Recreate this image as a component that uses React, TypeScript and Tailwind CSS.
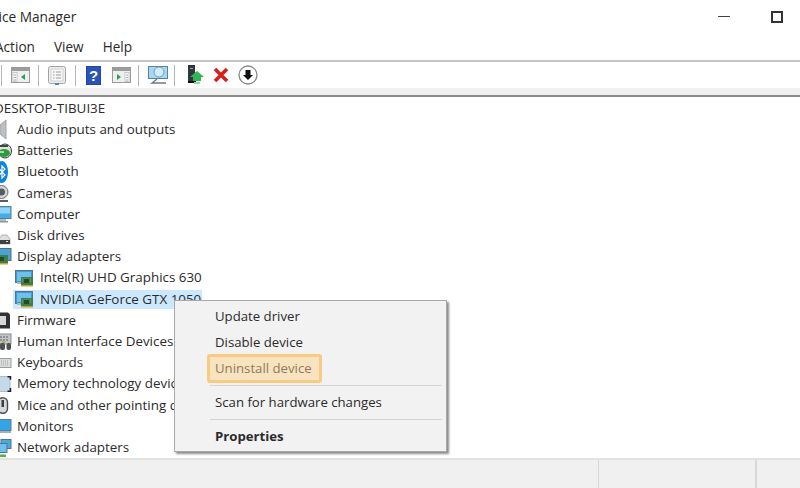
import React from "react";

const F = "font-['Open_Sans','Noto_Sans',sans-serif]";

function Monitor() {
  return (
    <svg width="19" height="18" viewBox="0 0 19 18">
      <rect x="0.500" y="1.500" width="17" height="12" fill="#3f9bd6" stroke="#5d7282" />
      <rect x="2" y="3" width="14" height="9" fill="#6fc0ec" />
      <rect x="2" y="13" width="6" height="2" fill="#a9b6bf" />
      <rect x="6" y="8" width="12" height="8" fill="#3e7f46" />
      <path d="M7 10h10M7 12h10" stroke="#7bb07a" strokeDasharray="1 1" />
      <rect x="9" y="10" width="5" height="4" fill="#26492c" />
      <rect x="6" y="16" width="12" height="1.500" fill="#c9a23a" />
    </svg>
  );
}

const I: Record<string, React.ReactNode> = {
  audio: (
    <svg width="16" height="21" viewBox="0 0 16 21">
      <path d="M0 6l6-5v19l-6-5z" fill="#bcc0c2" stroke="#a3a7aa" />
    </svg>
  ),
  batt: (
    <svg width="16" height="18" viewBox="0 0 16 18">
      <ellipse cx="5" cy="9" rx="6.500" ry="7" fill="#dfe5dc" stroke="#3a3d3c" />
      <ellipse cx="4" cy="11" rx="6" ry="4" fill="#2f9b41" />
      <path d="M0 4h8" stroke="#404446" strokeWidth="2" />
      <rect x="0" y="9" width="4" height="2" fill="#a7dba6" />
    </svg>
  ),
  bt: (
    <svg width="16" height="22" viewBox="0 0 16 22">
      <ellipse cx="2" cy="11" rx="6" ry="11" fill="#0a84e0" />
      <path d="M-1 7.500l6 6.500-3 3V5l3 3-6 6.500" fill="none" stroke="#fff" strokeWidth="1.200" />
    </svg>
  ),
  cam: (
    <svg width="16" height="17" viewBox="0 0 16 17">
      <circle cx="1.500" cy="7" r="6.500" fill="#d4d6d8" stroke="#6a6d70" />
      <circle cx="1.500" cy="7" r="3.500" fill="#555b60" />
      <rect x="-2" y="15" width="10" height="2" fill="#5b5f63" />
    </svg>
  ),
  comp: (
    <svg width="16" height="17" viewBox="0 0 16 17">
      <rect x="-3" y="0.500" width="14" height="12" fill="#49abe6" stroke="#5c7f98" />
      <rect x="-2" y="1.500" width="12" height="6" fill="#8fd3f6" />
      <rect x="0" y="13" width="6" height="2" fill="#b4bcc2" />
      <rect x="-2" y="15" width="10" height="1.500" fill="#8a949b" />
    </svg>
  ),
  disk: (
    <svg width="16" height="18" viewBox="0 0 16 18">
      <path d="M-1 12L2 8h5l3 4v5H-1z" fill="#dedfe0" stroke="#8b8d8f" strokeWidth="0.600" />
      <rect x="-1" y="13" width="11" height="4" fill="#3e4042" />
      <rect x="6" y="14" width="2" height="1" fill="#ddd" />
    </svg>
  ),
  disp: (
    <svg width="16" height="17" viewBox="0 0 16 17">
      <rect x="-3" y="0.500" width="14" height="12" fill="#4aa3d8" stroke="#5a6a78" />
      <rect x="-2" y="7" width="10" height="8" fill="#3e7f46" />
      <rect x="0" y="9" width="4" height="4" fill="#26492c" />
      <rect x="-2" y="15" width="10" height="1.500" fill="#c9a23a" />
    </svg>
  ),
  firm: (
    <svg width="16" height="17" viewBox="0 0 16 17">
      <path d="M-2 0.500h10l2 2v14H-2z" fill="#2f3133" />
      <rect x="-2" y="4" width="8" height="9" fill="#d5d7d8" />
    </svg>
  ),
  hid: (
    <svg width="16" height="18" viewBox="0 0 16 18">
      <rect x="-2" y="1" width="13" height="10" fill="#c2c5c8" stroke="#8a8c8e" />
      <path d="M0 4h9M0 7h9" stroke="#5b5e60" strokeDasharray="2 1" />
      <rect x="0" y="10" width="5" height="7" rx="2" fill="#4d5154" />
      <rect x="6.500" y="10" width="4.500" height="7" rx="2" fill="#4d5154" />
      <rect x="2" y="8" width="3" height="2" fill="#c9a23a" />
    </svg>
  ),
  kb: (
    <svg width="16" height="10" viewBox="0 0 16 10">
      <rect x="-3" y="0.500" width="14" height="9" fill="#dcdddd" stroke="#9a9c9e" />
      <path d="M-1 3h10M-1 5h10M-1 7h10" stroke="#a0a2a4" strokeDasharray="1 1" />
    </svg>
  ),
  mem: (
    <svg width="16" height="16" viewBox="0 0 16 16">
      <rect x="-3" y="0.500" width="13" height="15" rx="1" fill="#c4d9ea" stroke="#a9bccb" />
      <path d="M7.500 0.800h3v3M10.500 12v3.200h-3" fill="none" stroke="#1e1e1e" strokeWidth="1.500" />
    </svg>
  ),
  mouse: (
    <svg width="16" height="17" viewBox="0 0 16 17">
      <rect x="-2" y="0.700" width="9.500" height="15.600" rx="4.700" fill="#d6d8d9" stroke="#484a4d" strokeWidth="1.400" />
      <rect x="1.500" y="3" width="2.500" height="7" fill="#3d4043" />
    </svg>
  ),
  mon: (
    <svg width="16" height="14" viewBox="0 0 16 14">
      <rect x="-3" y="0.500" width="14" height="11" fill="#35a4e6" stroke="#5c7f98" />
      <rect x="-3" y="12" width="14" height="2" fill="#9fb0bb" />
    </svg>
  ),
  net: (
    <svg width="16" height="18" viewBox="0 0 16 18">
      <rect x="1" y="0.500" width="10" height="9" fill="#4aa9e0" stroke="#50758f" />
      <rect x="-3" y="4.500" width="10" height="9" fill="#6fc0ec" stroke="#50758f" />
      <rect x="-3" y="15.500" width="9" height="2.500" fill="#57b04a" />
    </svg>
  ),
};

const rows: { k: string; t: string; child?: boolean; sel?: boolean }[] = [
  { k: "desktop", t: "DESKTOP-TIBUI3E" },
  { k: "audio", t: "Audio inputs and outputs" },
  { k: "batt", t: "Batteries" },
  { k: "bt", t: "Bluetooth" },
  { k: "cam", t: "Cameras" },
  { k: "comp", t: "Computer" },
  { k: "disk", t: "Disk drives" },
  { k: "disp", t: "Display adapters" },
  { k: "", t: "Intel(R) UHD Graphics 630", child: true },
  { k: "", t: "NVIDIA GeForce GTX 1050", child: true, sel: true },
  { k: "firm", t: "Firmware" },
  { k: "hid", t: "Human Interface Devices" },
  { k: "kb", t: "Keyboards" },
  { k: "mem", t: "Memory technology devices" },
  { k: "mouse", t: "Mice and other pointing devices" },
  { k: "mon", t: "Monitors" },
  { k: "net", t: "Network adapters" },
];

function Sep() {
  return <div className="w-px h-[21px] bg-[#b5b5b5]" />;
}

function Win({ arrow, panes }: { arrow: string; panes: number[] }) {
  return (
    <svg width="19" height="16" viewBox="0 0 19 16">
      <rect x="0.500" y="0.500" width="18" height="15" fill="#efefef" stroke="#9a9a9a" />
      <rect x="1" y="1" width="17" height="3" fill="#9c9c9c" />
      {panes.map((x) => (
        <g key={x}>
          <rect x={x} y="5.500" width="4" height="9" fill="#fff" stroke="#a9a9a9" strokeWidth="0.600" />
          <path d={`M${x + 1} 8h2M${x + 1} 10.500h2M${x + 1} 13h2`} stroke="#7f93a3" strokeWidth="0.800" />
        </g>
      ))}
      <path d={arrow} fill="#27a34a" />
    </svg>
  );
}

export default function App() {
  return (
    <div className={`relative w-[800px] h-[488px] overflow-hidden bg-white flex flex-col text-[#2b2b2b] ${F}`}>
      {/* title bar */}
      <div className="h-[33px] flex items-center justify-between shrink-0">
        <span className="text-[13.700px] ml-[-26px] leading-none">Device Manager</span>
        <div className="flex items-center mr-[17px] gap-[41px]">
          <div className="w-3 h-px bg-[#444]" />
          <div className="w-[12px] h-[12px] border-2 border-[#333]" />
        </div>
      </div>
      {/* menu */}
      <div className="h-[27px] flex items-center text-[13.600px] ml-[-5px] gap-[19px] shrink-0 pt-[2px]">
        <span>Action</span>
        <span>View</span>
        <span>Help</span>
      </div>
      {/* toolbar */}
      <div className="h-[28px] border-t-2 border-[#c4c4c4] flex items-center shrink-0 pl-[1px]">
        <Sep />
        <div className="ml-[9px]"><Win arrow="M14 7v6l-4-3z" panes={[2]} /></div>
        <div className="ml-[8px]"><Sep /></div>
        <div className="ml-[9px]">
          <svg width="18" height="19" viewBox="0 0 18 19">
            <rect x="0.500" y="0.500" width="17" height="17" rx="2" fill="#eeeeee" stroke="#a3a3a3" />
            <rect x="3" y="3" width="12" height="12" fill="#f7f7f7" stroke="#bcbcbc" strokeWidth="0.600" />
            <path d="M5 6h1.500M8 6h5M5 9h1.500M8 9h5M5 12h1.500M8 12h5" stroke="#9b9b9b" />
            <rect x="7" y="17" width="4" height="2" fill="#3a8fd0" />
          </svg>
        </div>
        <div className="ml-[9px]"><Sep /></div>
        <div className="ml-[10px]">
          <svg width="15" height="19" viewBox="0 0 15 19">
            <rect width="15" height="19" fill="#2b54b8" stroke="#1a3a8a" />
            <text x="7.500" y="15" textAnchor="middle" fontSize="15" fontWeight="700" fill="#fff" fontFamily="Liberation Sans">?</text>
          </svg>
        </div>
        <div className="ml-[11px]"><Win arrow="M5 7v6l4-3z" panes={[13]} /></div>
        <div className="ml-[7px]"><Sep /></div>
        <div className="ml-[9px]">
          <svg width="20" height="18" viewBox="0 0 20 18">
            <rect x="0.500" y="0.500" width="19" height="12" fill="#a9d6f2" stroke="#54849f" />
            <circle cx="11" cy="6" r="5" fill="#d3ecfa" stroke="#6fa2be" />
            <path d="M9 13l-5 4h14" stroke="#6f7b82" strokeWidth="1.400" fill="none" />
          </svg>
        </div>
        <div className="ml-[6px]"><Sep /></div>
        <div className="ml-[13px]">
          <svg width="16" height="20" viewBox="0 0 16 20">
            <rect x="0" y="0" width="7" height="16" fill="#30373a" />
            <rect x="2" y="3" width="3" height="1" fill="#9fb0a0" />
            <rect x="0" y="16" width="8" height="2" fill="#111" />
            <path d="M9 6l7 6h-3v4H5v-4H2z" fill="#2fb457" />
            <rect x="6" y="17" width="6" height="2" fill="#8fd8a2" />
          </svg>
        </div>
        <div className="ml-[9px]">
          <svg width="16" height="16" viewBox="0 0 16 16">
            <path d="M2 2l12 12M14 2L2 14" stroke="#d6201f" strokeWidth="3.600" />
          </svg>
        </div>
        <div className="ml-[9px]">
          <svg width="20" height="20" viewBox="0 0 20 20">
            <circle cx="10" cy="10" r="9" fill="#fff" stroke="#888" strokeWidth="1.300" />
            <path d="M7.500 5h5v5h2.500l-5 5-5-5h2.500z" fill="#111" />
          </svg>
        </div>
      </div>
      <div className="h-[7px] bg-[#f0f0f0] shrink-0" />
      <div className="h-[2px] bg-[#8c8c8c] shrink-0" />
      {/* tree */}
      <div className="flex-1 min-h-0 overflow-hidden pt-[1px]">
        {rows.map((r) => (
          <div key={r.t} className="h-[21.200px] flex items-center text-[13.400px] leading-none whitespace-nowrap">
            {r.child ? (
              <div className={`ml-[13px] h-[19px] flex items-center pl-[2px] ${r.sel ? "bg-[#cce8ff]" : ""}`}>
                <Monitor />
                <span className="ml-[6px] pr-[1px]">{r.t}</span>
              </div>
            ) : r.k === "desktop" ? (
              <span className="ml-[-6px]">{r.t}</span>
            ) : (
              <div className="flex items-center">
                <span className="w-4 flex items-center">{I[r.k]}</span>
                <span className="ml-[1px]">{r.t}</span>
              </div>
            )}
          </div>
        ))}
      </div>
      {/* status bar */}
      <div className="h-[30px] shrink-0 border-t-2 border-[#e3e3e3] bg-[#f0f0f0] flex justify-end">
        <div className="w-[157px] border-l border-[#d8d8d8]" />
        <div className="w-[45px] border-l-2 border-[#d8d8d8]" />
      </div>
      {/* context menu */}
      <div className="absolute left-[174px] top-[300px] w-[273px] h-[152px] bg-[#f2f2f2] border border-[#a8a8a8] shadow-[2px_2px_2px_rgba(0,0,0,0.45)] text-[13.200px] leading-none whitespace-nowrap">
        <div className="pl-[40px] h-[26px] mt-[3px] flex items-center">Update driver</div>
        <div className="pl-[40px] h-[25px] flex items-center">Disable device</div>
        <div className="ml-[32px] w-[115px] h-[29px] -mt-[1px] flex items-center pl-[5px] rounded-[3px] border-[3px] border-[#f7cb82] bg-[#f8e3c0] text-[#8d7a5c]">
          Uninstall device
        </div>
        <div className="ml-[35px] mr-[4px] h-px bg-[#d4d4d4] mt-[2px]" />
        <div className="pl-[40px] h-[33px] flex items-center">Scan for hardware changes</div>
        <div className="ml-[35px] mr-[4px] h-px bg-[#d4d4d4]" />
        <div className="pl-[40px] h-[33px] flex items-center font-bold">Properties</div>
      </div>
    </div>
  );
}
